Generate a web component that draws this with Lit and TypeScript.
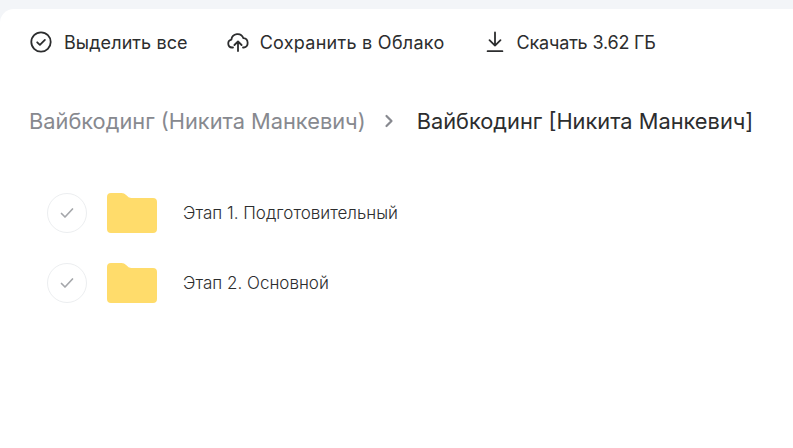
import { LitElement, html, css } from "lit";
import { customElement } from "lit/decorators.js";

const folders = ["Этап 1. Подготовительный", "Этап 2. Основной"];

@customElement("app-root")
export class AppRoot extends LitElement {
  static styles = css`
    :host {
      display: block;
      width: 793px;
      height: 448px;
      overflow: hidden;
      background: #f3f5f8;
      padding-top: 9px;
      box-sizing: border-box;
      font-family: Inter, "Noto Sans", sans-serif;
      color: #2c2d2e;
    }
    .card {
      height: 439px;
      background: #fff;
      border-top-left-radius: 14px;
    }
    .toolbar {
      display: flex;
      align-items: center;
      height: 66px;
      padding-left: 30px;
      font-size: 18px;
      letter-spacing: 0.005em;
    }
    .action {
      display: flex;
      align-items: center;
      gap: 12px;
      margin-right: 39px;
      white-space: nowrap;
    }
    .action svg {
      display: block;
      flex: none;
    }
    .save {
      gap: 11px;
    }
    .save span {
      letter-spacing: 0.015em;
    }
    .download {
      gap: 11px;
    }
    .download span {
      letter-spacing: -0.01em;
    }
    .crumbs {
      display: flex;
      align-items: center;
      margin-top: 26px;
      padding-left: 29px;
      height: 40px;
      font-size: 21.8px;
      white-space: nowrap;
    }
    .parent {
      color: #87898f;
    }
    .sep {
      display: block;
      margin: 0 22px 0 18px;
    }
    .list {
      margin-top: 37px;
      padding-left: 47px;
    }
    .row {
      display: flex;
      align-items: center;
      height: 70px;
      font-size: 17px;
      font-weight: 300;
    }
    .check {
      width: 38px;
      height: 38px;
      border: 1px solid #eceef0;
      border-radius: 50%;
      display: flex;
      align-items: center;
      justify-content: center;
      margin-right: 20px;
    }
    .folder {
      display: block;
      margin-right: 26px;
    }
  `;

  render() {
    return html`
      <div class="card">
        <div class="toolbar">
          <div class="action">
            <svg width="22" height="22" viewBox="0 0 22 22" fill="none" stroke="#2c2d2e" stroke-width="1.8" stroke-linecap="round" stroke-linejoin="round">
              <circle cx="11" cy="11" r="9.7"></circle>
              <path d="M7.2 11.3l2.7 2.6 5-5"></path>
            </svg>
            <span>Выделить все</span>
          </div>
          <div class="action save">
            <svg width="22" height="20" viewBox="0 0 22 20" fill="none" stroke="#2c2d2e" stroke-width="1.8" stroke-linecap="round" stroke-linejoin="round">
              <path d="M6 15.5H5a4 4 0 0 1-.6-7.9A6.2 6.2 0 0 1 16.4 6.2a4.7 4.7 0 0 1 .4 9.3H16"></path>
              <path d="M11 19V9.5M7.4 13L11 9.5l3.6 3.5"></path>
            </svg>
            <span>Сохранить в Облако</span>
          </div>
          <div class="action download">
            <svg width="22" height="22" viewBox="-2 0 22 22" fill="none" stroke="#2c2d2e" stroke-width="1.8" stroke-linecap="round" stroke-linejoin="round">
              <path d="M9 1.5v13M3.5 9.2L9 14.6l5.5-5.4"></path>
              <path d="M1.6 20.2h14.8"></path>
            </svg>
            <span>Скачать 3.62 ГБ</span>
          </div>
        </div>
        <div class="crumbs">
          <span class="parent">Вайбкодинг (Никита Манкевич)</span>
          <svg class="sep" width="11" height="14" viewBox="0 0 11 14" fill="none" stroke="#87898f" stroke-width="2.2" stroke-linecap="round" stroke-linejoin="round">
            <path d="M2.5 2l5 5-5 5"></path>
          </svg>
          <span>Вайбкодинг [Никита Манкевич]</span>
        </div>
        <div class="list">
          ${folders.map(
            (name) => html`
              <div class="row">
                <div class="check">
                  <svg width="14" height="12" viewBox="0 0 14 12" fill="none" stroke="#a5a7ab" stroke-width="1.7" stroke-linecap="round" stroke-linejoin="round">
                    <path d="M1.5 6.5L5 10l7.5-8"></path>
                  </svg>
                </div>
                <svg class="folder" width="50" height="40" viewBox="0 0 50 40">
                  <path fill="#ffdc6b" d="M0 4a4 4 0 0 1 4-4h10.5c2 0 3.2.7 4.6 2l1.7 1.6c1 1 2 1.4 3.4 1.4H46a4 4 0 0 1 4 4v27a4 4 0 0 1-4 4H4a4 4 0 0 1-4-4z"></path>
                </svg>
                <span>${name}</span>
              </div>
            `
          )}
        </div>
      </div>
    `;
  }
}
